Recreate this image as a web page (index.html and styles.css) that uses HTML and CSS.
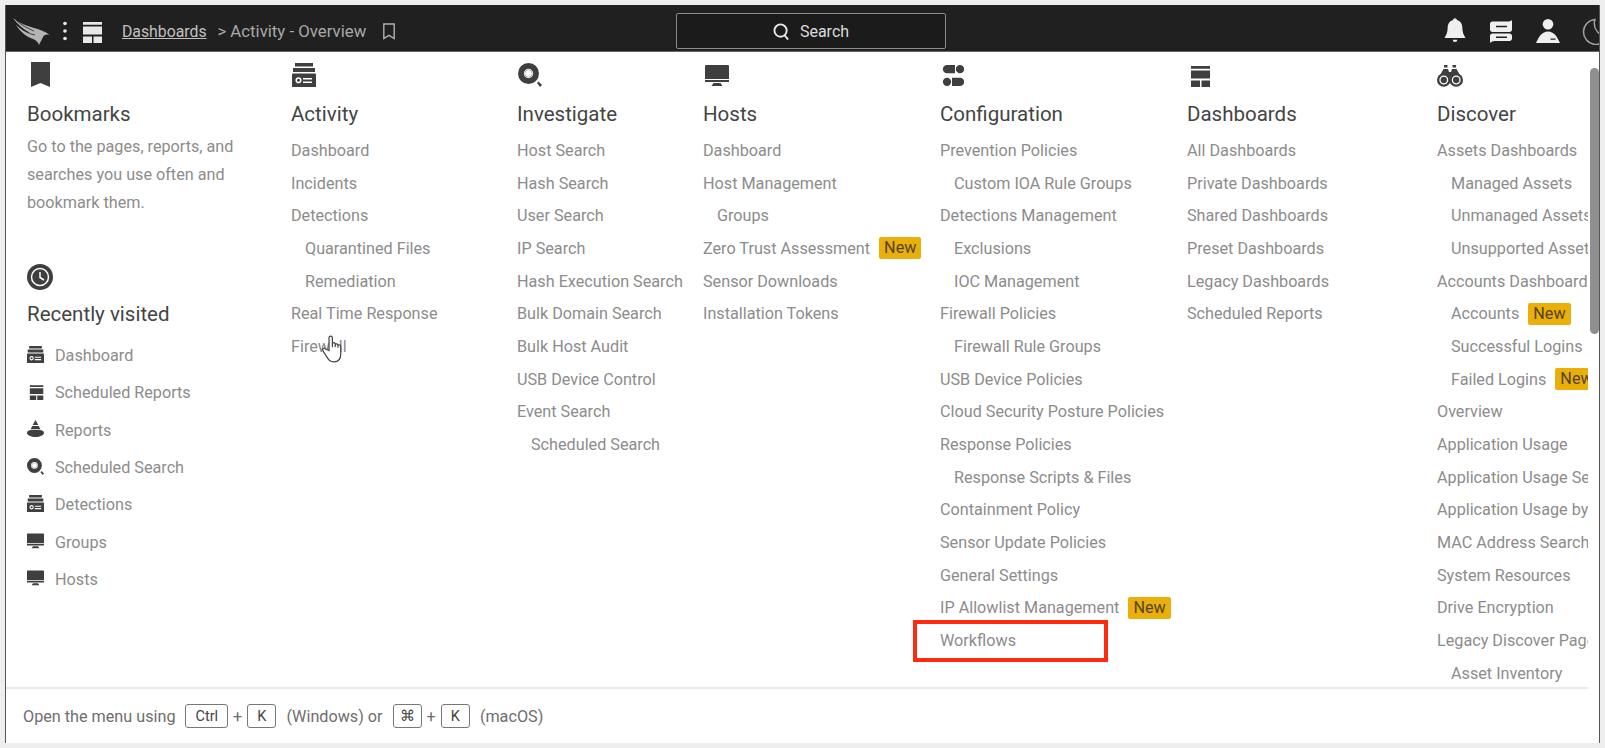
FILE: index.html
```html
<!DOCTYPE html>
<html lang="en">
<head>
    <meta charset="UTF-8">
    <title>Activity - Overview</title>
    <link rel="stylesheet" href="styles.css">
</head>
<body>
    <svg class="icon-defs" width="0" height="0">
        <symbol id="i-activity" viewBox="0 0 24 24">
            <path d="M3 0h18v3.500H3zM1 5h22v4H1zM1 10.500h22a1 1 0 0 1 1 1V24H0V11.500a1 1 0 0 1 1-1z"/>
            <circle cx="6.500" cy="17.300" r="2.300" fill="none" stroke="#fff" stroke-width="1.500"/>
            <path d="M11 15h9v1.600h-9zM11 18.400h9V20h-9z" fill="#fff"/>
        </symbol>
        <symbol id="i-layout" viewBox="0 0 24 24">
            <path d="M4 3h19v2.700H4zM4 7.500h19v8H4z"/>
            <path d="M14.500 17.500H23V24h-8.500zM4 17.500h9V24H4z"/>
        </symbol>
        <symbol id="i-search" viewBox="0 0 24 24">
            <path fill-rule="evenodd" d="M10.500 0a10.500 10.500 0 1 1 0 21 10.500 10.500 0 0 1 0-21zm0 5.800a4.700 4.700 0 1 0 0 9.400 4.700 4.700 0 0 0 0-9.400z"/>
            <circle cx="10.500" cy="10.500" r="3.700" fill="none" stroke="#b5b5b5" stroke-width="1"/>
            <path d="M19 20l1.500-1.500 3.500 3.500-2 2z"/>
        </symbol>
        <symbol id="i-host" viewBox="0 0 24 24">
            <path d="M1 2h22a1 1 0 0 1 1 1v13H0V3a1 1 0 0 1 1-1zM0 17h24v2H0zM8.500 20h7l2 3h-11z"/>
        </symbol>
        <symbol id="i-config" viewBox="0 0 24 24">
            <path d="M7 2h8v8.300H7a4.150 4.150 0 0 1 0-8.300zM20 10.300a4.150 4.150 0 1 1 0-8.300 4.150 4.150 0 0 1 0 8.300zM7 23a4.150 4.150 0 1 1 0-8.300A4.150 4.150 0 0 1 7 23zM12 14.700h8a4.150 4.150 0 0 1 0 8.300h-8z"/>
        </symbol>
        <symbol id="i-discover" viewBox="0 0 26 24">
            <path d="M7 2h3.500v2.500H7zM15.500 2H19v2.500h-3.500zM6.500 6H11l1 3h2l1-3h4.500L24 14H2z"/>
            <circle cx="6.800" cy="17" r="6.800"/>
            <circle cx="19.200" cy="17" r="6.800"/>
            <circle cx="6.800" cy="17" r="3.800" fill="none" stroke="#fff" stroke-width="1.300"/>
            <circle cx="19.200" cy="17" r="3.800" fill="none" stroke="#fff" stroke-width="1.300"/>
        </symbol>
        <symbol id="i-reports" viewBox="0 0 24 24">
            <path d="M12 0l4 7H8zM7.500 8.500h9l2.500 4.500H5zM5 14h14c3 .6 5 2 5 4 0 3.500-6 6-12 6S0 21.500 0 18c0-2 2-3.400 5-4z"/>
        </symbol>
    </svg>

    <div class="frame">
        <header class="topbar">
            <div class="topbar-left">
                <svg class="logo" viewBox="0 0 37 28" fill="#b4b4b4">
                    <path d="M0 1c6 5 14 8 21 10 5 1 10 3 16 7-4-1-6 0-7 2-1 3-3 5-4 8-1-3-3-5-6-6C13 20 7 14 3 8c5 4 9 7 14 8C10 12 4 7 0 1z"/>
                    <path d="M3 3c5 5 11 8 18 11M6 10c5 4 10 7 16 8" fill="none" stroke="#202020" stroke-width=".8"/>
                </svg>
                <svg class="dots" viewBox="0 0 6 24" fill="#e6e6e6">
                    <circle cx="3" cy="3" r="2.200"/>
                    <circle cx="3" cy="12" r="2.200"/>
                    <circle cx="3" cy="21" r="2.200"/>
                </svg>
                <svg class="bar-icon" fill="#e8e8e8"><use href="#i-layout"/></svg>
                <a class="crumb-link" href="#">Dashboards</a>
                <span class="crumb-sep">&gt;</span>
                <span class="crumb">Activity - Overview</span>
                <svg class="crumb-mark" viewBox="0 0 14 18" fill="none" stroke="#b0b0b0" stroke-width="1.500">
                    <path d="M1.500 1h11v15.500L7 13l-5.500 3.500z"/>
                </svg>
            </div>
            <div class="searchbox">
                <svg class="search-glass" viewBox="0 0 18 18" fill="none" stroke="#e8e8e8" stroke-width="2">
                    <circle cx="8" cy="8" r="6.500"/>
                    <path d="M12 12.500l4 5"/>
                </svg>
                <span>Search</span>
            </div>
            <div class="topbar-right">
                <svg class="bell" viewBox="0 0 24 28" fill="#efefef">
                    <path d="M12 0c1.200 0 2 .8 2 2 4 1 6 4.500 6 8.500 0 5 1.500 8 3.500 11H.5C2.500 18.500 4 15.500 4 10.500 4 6.500 6 3 10 2c0-1.200.8-2 2-2zM9.500 23.500h5a2.500 2.500 0 0 1-5 0z"/>
                </svg>
                <svg class="chat" viewBox="0 0 22 23" fill="#efefef">
                    <path fill-rule="evenodd" d="M0 4c0-1.500 1-2.500 2.500-2.500H17C19 1.500 21 1 22 0v9.500c0 1.500-1 2.500-2.500 2.500h-17C1 12 0 11 0 9.500zM6 5.800v1.500h11V5.800zM2.500 13.500h17c1.500 0 2.500 1 2.500 2.500v2.500c0 1.500-1 2.500-2.500 2.500H5c-2 0-4 .8-5 2V16c0-1.500 1-2.500 2.500-2.500zM6 16.500V18h11v-1.500z"/>
                </svg>
                <svg class="person" viewBox="0 0 24 24" fill="#efefef">
                    <circle cx="12" cy="5.300" r="5.300"/>
                    <path fill-rule="evenodd" d="M12 12.500c6 0 9 5 12 11.500H0c3-6.500 6-11.500 12-11.500zM14.500 19.500v1.200h5v-1.200z"/>
                </svg>
                <svg class="moon" viewBox="0 0 27 27" fill="none" stroke="#a0a0a0" stroke-width="1.500">
                    <path d="M13 1.500a12.500 12.500 0 1 0 13 16c-8 2-16-7-13-16z"/>
                </svg>
            </div>
        </header>

        <div class="menu">
            <div class="menu-columns">
                <section class="column col-bookmarks">
                    <svg class="col-icon" viewBox="0 0 24 24"><path d="M3 -1h19v25l-9.500-4-9.500 4z"/></svg>
                    <h2>Bookmarks</h2>
                    <p class="hint">Go to the pages, reports, and searches you use often and bookmark them.</p>
                    <svg class="col-icon recent-icon" viewBox="0 0 26 26">
                        <circle cx="13" cy="13" r="13"/>
                        <circle cx="13" cy="13" r="8.500" fill="none" stroke="#fff" stroke-width="1.500"/>
                        <path d="M13 8v5.500l4 2.500" fill="none" stroke="#fff" stroke-width="1.500"/>
                    </svg>
                    <h2>Recently visited</h2>
                    <ul class="recent">
                        <li><svg><use href="#i-activity"/></svg>Dashboard</li>
                        <li><svg><use href="#i-layout"/></svg>Scheduled Reports</li>
                        <li><svg><use href="#i-reports"/></svg>Reports</li>
                        <li><svg><use href="#i-search"/></svg>Scheduled Search</li>
                        <li><svg><use href="#i-activity"/></svg>Detections</li>
                        <li><svg><use href="#i-host"/></svg>Groups</li>
                        <li><svg><use href="#i-host"/></svg>Hosts</li>
                    </ul>
                </section>

                <section class="column col-activity">
                    <svg class="col-icon"><use href="#i-activity"/></svg>
                    <h2>Activity</h2>
                    <ul>
                        <li>Dashboard</li>
                        <li>Incidents</li>
                        <li>Detections</li>
                        <li class="sub">Quarantined Files</li>
                        <li class="sub">Remediation</li>
                        <li>Real Time Response</li>
                        <li>Firewall</li>
                    </ul>
                </section>

                <section class="column col-investigate">
                    <svg class="col-icon"><use href="#i-search"/></svg>
                    <h2>Investigate</h2>
                    <ul>
                        <li>Host Search</li>
                        <li>Hash Search</li>
                        <li>User Search</li>
                        <li>IP Search</li>
                        <li>Hash Execution Search</li>
                        <li>Bulk Domain Search</li>
                        <li>Bulk Host Audit</li>
                        <li>USB Device Control</li>
                        <li>Event Search</li>
                        <li class="sub">Scheduled Search</li>
                    </ul>
                </section>

                <section class="column col-hosts">
                    <svg class="col-icon"><use href="#i-host"/></svg>
                    <h2>Hosts</h2>
                    <ul>
                        <li>Dashboard</li>
                        <li>Host Management</li>
                        <li class="sub">Groups</li>
                        <li>Zero Trust Assessment <span class="badge">New</span></li>
                        <li>Sensor Downloads</li>
                        <li>Installation Tokens</li>
                    </ul>
                </section>

                <section class="column col-config">
                    <svg class="col-icon"><use href="#i-config"/></svg>
                    <h2>Configuration</h2>
                    <ul>
                        <li>Prevention Policies</li>
                        <li class="sub">Custom IOA Rule Groups</li>
                        <li>Detections Management</li>
                        <li class="sub">Exclusions</li>
                        <li class="sub">IOC Management</li>
                        <li>Firewall Policies</li>
                        <li class="sub">Firewall Rule Groups</li>
                        <li>USB Device Policies</li>
                        <li>Cloud Security Posture Policies</li>
                        <li>Response Policies</li>
                        <li class="sub">Response Scripts &amp; Files</li>
                        <li>Containment Policy</li>
                        <li>Sensor Update Policies</li>
                        <li>General Settings</li>
                        <li>IP Allowlist Management <span class="badge">New</span></li>
                        <li>Workflows</li>
                    </ul>
                </section>

                <section class="column col-dashboards">
                    <svg class="col-icon"><use href="#i-layout"/></svg>
                    <h2>Dashboards</h2>
                    <ul>
                        <li>All Dashboards</li>
                        <li>Private Dashboards</li>
                        <li>Shared Dashboards</li>
                        <li>Preset Dashboards</li>
                        <li>Legacy Dashboards</li>
                        <li>Scheduled Reports</li>
                    </ul>
                </section>

                <section class="column col-discover">
                    <svg class="col-icon"><use href="#i-discover"/></svg>
                    <h2>Discover</h2>
                    <ul>
                        <li>Assets Dashboards</li>
                        <li class="sub">Managed Assets</li>
                        <li class="sub">Unmanaged Assets</li>
                        <li class="sub">Unsupported Assets</li>
                        <li>Accounts Dashboards</li>
                        <li class="sub">Accounts <span class="badge">New</span></li>
                        <li class="sub">Successful Logins</li>
                        <li class="sub">Failed Logins <span class="badge">New</span></li>
                        <li>Overview</li>
                        <li>Application Usage</li>
                        <li>Application Usage Search</li>
                        <li>Application Usage by Host</li>
                        <li>MAC Address Search</li>
                        <li>System Resources</li>
                        <li>Drive Encryption</li>
                        <li>Legacy Discover Pages</li>
                        <li class="sub">Asset Inventory</li>
                    </ul>
                </section>
            </div>

            <footer class="shortcut">
                <span class="lead">Open the menu using</span>
                <kbd>Ctrl</kbd>
                <span>+</span>
                <kbd>K</kbd>
                <span class="after-key">(Windows) or</span>
                <kbd class="key-cmd">⌘</kbd>
                <span>+</span>
                <kbd>K</kbd>
                <span class="after-key">(macOS)</span>
            </footer>

            <div class="scrollbar"></div>
        </div>

        <div class="highlight"></div>
        <svg class="cursor" viewBox="0 0 20 26" fill="#fff" stroke="#444" stroke-width="1.100">
            <path d="M6 2.500c0-2 3-2 3 0V11V8c0-1.500 2.500-1.500 2.500 0v3-2c0-1.500 2.500-1.500 2.500 0v2.500-1.500c0-1.500 2.500-1.500 2.500 0v7c0 4-2 7-6 7s-5-2-7-5l-3-5c-1-1.500 1-3 2.500-1.500L6 14z"/>
        </svg>
    </div>
</body>
</html>
```

FILE: styles.css
```css
* {
    box-sizing: border-box;
}

html, body {
    margin: 0;
    height: 100%;
    overflow: hidden;
}

body {
    background-color: #eeeeee;
    padding: 5px;
    font-family: Roboto, "Liberation Sans", sans-serif;
    color: #8a8a8a;
}

.icon-defs {
    display: none;
}

.frame {
    position: relative;
    height: 738px;
    display: flex;
    flex-direction: column;
    background: #fff;
    border-left: 1px solid #555;
    border-right: 1px solid #555;
    overflow: hidden;
}

/* top bar */
.topbar {
    flex: 0 0 47px;
    display: grid;
    grid-template-columns: 670px 270px 1fr;
    align-items: center;
    background: #202020;
    border-bottom: 1px solid #666;
    padding-top: 6px;
}

.topbar-left {
    display: flex;
    align-items: center;
    color: #a8a8a8;
    font-size: 16.800px;
}

.logo {
    width: 37px;
    height: 28px;
    margin-left: 7px;
}

.dots {
    width: 6px;
    height: 20px;
    margin-left: 12px;
}

.bar-icon {
    width: 24px;
    height: 24px;
    margin-left: 11px;
}

.crumb-link {
    margin-left: 19px;
    font-size: 15.800px;
    color: #c0c0c0;
}

.crumb-sep {
    margin: 0 4px 0 11px;
}

.crumb-mark {
    width: 14px;
    height: 17px;
    margin-left: 16px;
}

.searchbox {
    height: 36px;
    display: flex;
    align-items: center;
    justify-content: center;
    gap: 10px;
    border: 1px solid #8a8a8a;
    border-radius: 2px;
    background: #1b1b1b;
    color: #dcdcdc;
    font-size: 16px;
}

.search-glass {
    width: 17px;
    height: 17px;
}

.topbar-right {
    display: flex;
    justify-content: flex-end;
    align-items: center;
    overflow: hidden;
}

.bell {
    flex: none;
    width: 22px;
    height: 26px;
}

.chat {
    flex: none;
    width: 22px;
    height: 23px;
    margin-left: 24px;
}

.person {
    flex: none;
    width: 24px;
    height: 24px;
    margin-left: 24px;
}

.moon {
    flex: none;
    width: 27px;
    height: 27px;
    margin-left: 22px;
    margin-right: -10px;
}

/* menu columns */
.menu {
    position: relative;
    flex: 1;
    min-height: 0;
    display: flex;
    flex-direction: column;
    padding-right: 11px;
}

.menu-columns {
    flex: 1;
    min-height: 0;
    display: flex;
    overflow: hidden;
    padding-left: 21px;
}

.column {
    flex: none;
    padding-top: 11px;
    white-space: nowrap;
}

.col-bookmarks { width: 264px; }
.col-activity { width: 226px; }
.col-investigate { width: 186px; }
.col-hosts { width: 237px; }
.col-config { width: 247px; }
.col-dashboards { width: 250px; }
.col-discover { width: 153px; }

.col-icon {
    display: block;
    width: 24px;
    height: 24px;
    margin-left: 1px;
    overflow: visible;
    fill: #3f3f3f;
}

.col-hosts .col-icon {
    margin-left: 2px;
}

.col-config .col-icon,
.col-dashboards .col-icon {
    margin-left: 0;
}

.col-discover .col-icon {
    width: 26px;
    margin-left: 0;
}

.column h2 {
    margin: 12px 0 5px;
    font-size: 20.500px;
    font-weight: 400;
    line-height: 30px;
    color: #444;
}

.column ul {
    list-style: none;
    margin: 0;
    padding: 0;
}

.column ul li {
    display: flex;
    align-items: center;
    gap: 9px;
    height: 32.700px;
    font-size: 16.200px;
    color: #8c8c8c;
}

.column li.sub {
    padding-left: 14px;
}

.badge {
    flex: none;
    padding: 2px 5px;
    line-height: 18px;
    background: #eaaf0a;
    border-radius: 2px;
    color: #54431a;
}

.hint {
    width: 215px;
    margin: -1px 0 0;
    font-size: 16.200px;
    line-height: 28px;
    white-space: normal;
    color: #8c8c8c;
}

.col-bookmarks .recent-icon {
    width: 26px;
    height: 26px;
    margin-top: 47px;
    margin-left: 0;
}

.column .recent-icon + h2 {
    margin: 9px 0 8px;
}

.column .recent li {
    height: 37.300px;
    gap: 11px;
}

.recent svg {
    flex: none;
    width: 17px;
    height: 17px;
    margin-top: -3px;
    fill: #3f3f3f;
}

.scrollbar {
    position: absolute;
    top: 16px;
    right: 0;
    width: 9px;
    height: 266px;
    border-radius: 5px;
    background: #8f8f8f;
}

/* shortcut footer */
.shortcut {
    flex: 0 0 56px;
    display: flex;
    align-items: center;
    gap: 5px;
    padding-left: 17px;
    border-top: 2px solid #eaeaea;
    font-size: 16.200px;
    color: #6e6e6e;
}

.lead {
    margin-right: 5px;
}

.shortcut kbd {
    min-width: 29px;
    height: 24px;
    display: inline-flex;
    align-items: center;
    justify-content: center;
    padding: 0 9px;
    border: 1px solid #777;
    border-radius: 3px;
    font-family: Roboto, "Liberation Sans", sans-serif;
    font-size: 14.500px;
    color: #444;
}

.shortcut .key-cmd {
    padding: 0 5px;
}

.after-key {
    margin: 0 5px;
}

/* overlays on the screenshot */
.highlight {
    position: absolute;
    left: 907px;
    top: 615px;
    width: 195px;
    height: 42px;
    border: 4px solid #ff2a0e;
}

.cursor {
    position: absolute;
    left: 316px;
    top: 330px;
    width: 23px;
    height: 29px;
}
```
